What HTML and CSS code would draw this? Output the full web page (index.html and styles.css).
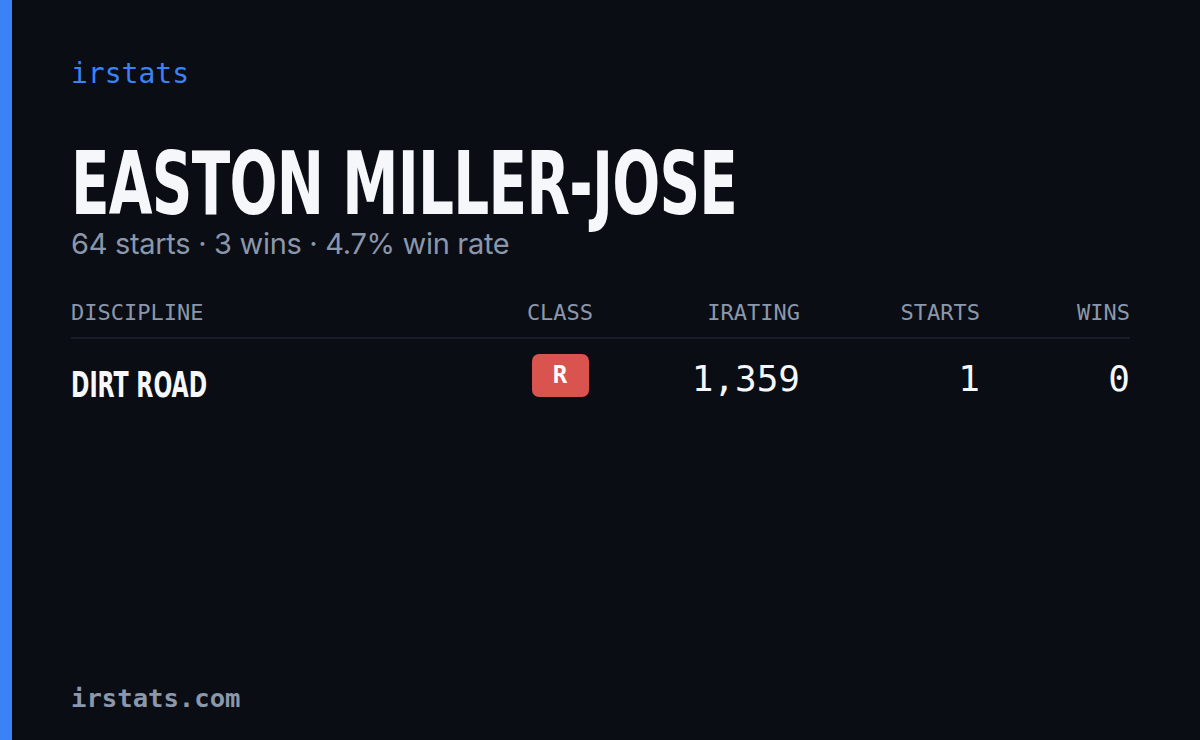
FILE: index.html
```html
<!DOCTYPE html>
<html>
<head>
<meta charset="utf-8">
<link rel="stylesheet" href="styles.css">
</head>
<body>
<div class="card">
  <div class="accent"></div>
  <div class="content">
    <div class="brand">irstats</div>
    <h1 class="name"><span class="narrow">EASTON MILLER-JOSE</span></h1>
    <div class="summary">64 starts · 3 wins · 4.7% win rate</div>
    <div class="table">
      <div class="row head">
        <div class="cell">DISCIPLINE</div>
        <div class="cell center">CLASS</div>
        <div class="cell right">IRATING</div>
        <div class="cell right">STARTS</div>
        <div class="cell right">WINS</div>
      </div>
      <div class="row body">
        <div class="cell disc"><span class="narrow-sm">DIRT ROAD</span></div>
        <div class="cell center"><span class="badge">R</span></div>
        <div class="cell right num">1,359</div>
        <div class="cell right num">1</div>
        <div class="cell right num">0</div>
      </div>
    </div>
    <div class="spacer"></div>
    <div class="footer">irstats.com</div>
  </div>
</div>
</body>
</html>
```

FILE: styles.css
```css
html, body {
  margin: 0;
  padding: 0;
  background: #0a0d14;
}
.card {
  width: 1200px;
  height: 740px;
  display: flex;
  background: #0a0d14;
  overflow: hidden;
}
.accent {
  width: 12px;
  background: #3b82f6;
  flex: none;
}
.content {
  flex: 1;
  display: flex;
  flex-direction: column;
  padding: 54px 70px 27px 59px;
}
.brand {
  font-family: "DejaVu Sans Mono", "Liberation Mono", monospace;
  font-size: 28px;
  color: #3b82f6;
  line-height: 40px;
}
.name {
  margin: 45px 0 0 0;
  font-family: "DejaVu Sans Condensed", "DejaVu Sans", sans-serif;
  font-weight: 700;
  font-size: 88px;
  line-height: 90px;
  color: #f5f7fb;
  letter-spacing: -1px;
  white-space: nowrap;
}
.narrow {
  display: inline-block;
  transform: scaleX(0.713);
  transform-origin: left center;
}
.summary {
  font-family: "Inter", "Noto Sans", sans-serif;
  font-size: 29px;
  color: #8b97ab;
  line-height: 30px;
  letter-spacing: -0.3px;
}
.table {
  margin-top: 41px;
}
.row {
  display: grid;
  grid-template-columns: 1fr 130px 175px 180px 150px;
  align-items: start;
}
.head {
  font-family: "DejaVu Sans Mono", "Liberation Mono", monospace;
  font-size: 22px;
  color: #8b97ab;
  padding-bottom: 11px;
  border-bottom: 2px solid #191d28;
  line-height: 26px;
}
.body {
  padding-top: 15px;
  color: #f5f7fb;
}
.cell.center { text-align: center; }
.cell.right { text-align: right; }
.disc {
  font-family: "DejaVu Sans Condensed", "DejaVu Sans", sans-serif;
  font-weight: 700;
  font-size: 35px;
  line-height: 44px;
  padding-top: 9px;
  white-space: nowrap;
}
.narrow-sm {
  display: inline-block;
  transform: scaleX(0.703);
  transform-origin: left center;
}
.num {
  font-family: "DejaVu Sans Mono", "Liberation Mono", monospace;
  font-size: 36px;
  line-height: 44px;
  margin-top: 3px;
}
.badge {
  display: inline-block;
  width: 57px;
  height: 43px;
  line-height: 43px;
  border-radius: 7px;
  background: #d9534f;
  color: #ffffff;
  font-family: "DejaVu Sans Mono", "Liberation Mono", monospace;
  font-weight: 700;
  font-size: 24px;
  text-align: center;
  vertical-align: top;
}
.spacer { flex: 1; }
.footer {
  font-family: "DejaVu Sans Mono", "Liberation Mono", monospace;
  font-size: 25.6px;
  font-weight: 700;
  color: #8b97ab;
  line-height: 30px;
}
```
